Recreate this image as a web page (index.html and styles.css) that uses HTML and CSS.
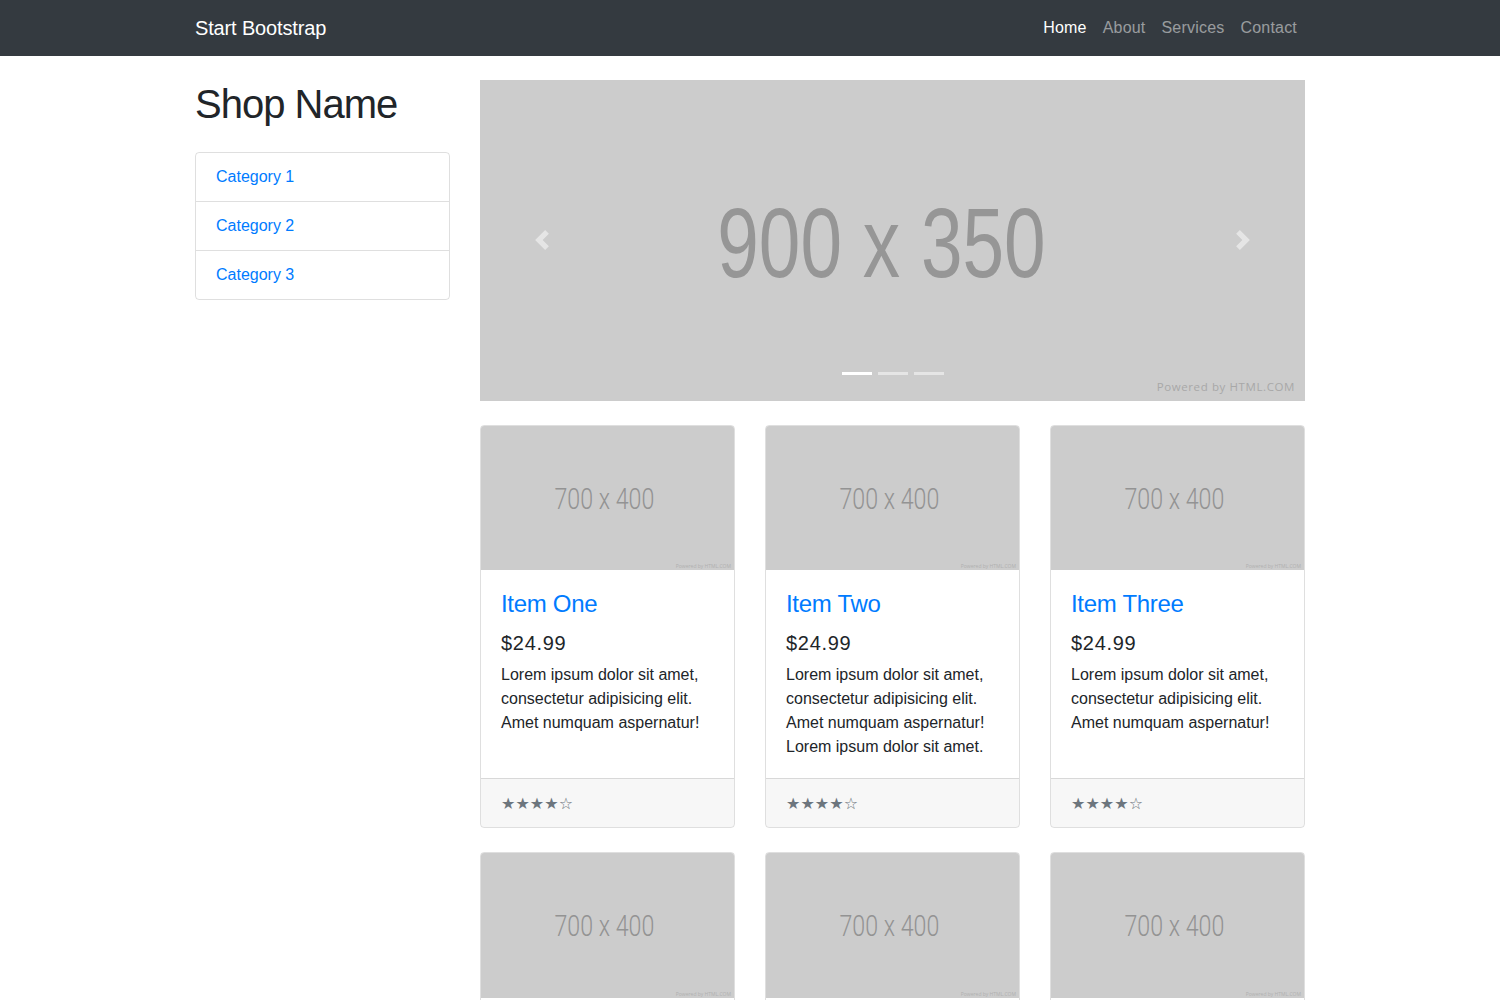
FILE: index.html
```html
<!DOCTYPE html>
<html lang="en">
<head>
<meta charset="utf-8">
<title>Shop Homepage - Start Bootstrap Template</title>
<link rel="stylesheet" href="styles.css">
</head>
<body>
<nav class="navbar">
  <div class="container nav-inner">
    <a class="brand" href="#">Start Bootstrap</a>
    <ul class="nav-links">
      <li><a class="nav-link active" href="#">Home</a></li>
      <li><a class="nav-link" href="#">About</a></li>
      <li><a class="nav-link" href="#">Services</a></li>
      <li><a class="nav-link" href="#">Contact</a></li>
    </ul>
  </div>
</nav>

<div class="container">
  <div class="row">
    <div class="col-side">
      <h1 class="shop-title">Shop Name</h1>
      <div class="list-group">
        <a href="#" class="list-item">Category 1</a>
        <a href="#" class="list-item">Category 2</a>
        <a href="#" class="list-item">Category 3</a>
      </div>
    </div>

    <div class="col-main">
      <div class="carousel">
        <div class="ph-big"><span class="ph-big-text">900 x 350</span></div>
        <span class="ph-powered">Powered by HTML.COM</span>
        <a class="carousel-ctrl prev" href="#">
          <svg class="ctrl-icon" viewBox="0 0 8 8" width="20" height="20"><path fill="#fff" d="M5.25 0l-4 4 4 4 1.5-1.5L4.25 4l2.5-2.5L5.25 0z"/></svg>
        </a>
        <a class="carousel-ctrl next" href="#">
          <svg class="ctrl-icon" viewBox="0 0 8 8" width="20" height="20"><path fill="#fff" d="M2.75 0l-1.5 1.5L3.75 4l-2.5 2.5L2.75 8l4-4-4-4z"/></svg>
        </a>
        <ol class="indicators">
          <li class="ind active"></li>
          <li class="ind"></li>
          <li class="ind"></li>
        </ol>
      </div>

      <div class="card-grid">
        <div class="card">
          <div class="card-img"><span class="card-img-text">700 x 400</span><span class="card-powered">Powered by HTML.COM</span></div>
          <div class="card-body">
            <h4 class="card-title"><a href="#">Item One</a></h4>
            <h5 class="price">$24.99</h5>
            <p class="card-text">Lorem ipsum dolor sit amet, consectetur adipisicing elit. Amet numquam aspernatur!</p>
          </div>
          <div class="card-footer"><small class="stars">&#9733; &#9733; &#9733; &#9733; &#9734;</small></div>
        </div>
        <div class="card">
          <div class="card-img"><span class="card-img-text">700 x 400</span><span class="card-powered">Powered by HTML.COM</span></div>
          <div class="card-body">
            <h4 class="card-title"><a href="#">Item Two</a></h4>
            <h5 class="price">$24.99</h5>
            <p class="card-text">Lorem ipsum dolor sit amet, consectetur adipisicing elit. Amet numquam aspernatur! Lorem ipsum dolor sit amet.</p>
          </div>
          <div class="card-footer"><small class="stars">&#9733; &#9733; &#9733; &#9733; &#9734;</small></div>
        </div>
        <div class="card">
          <div class="card-img"><span class="card-img-text">700 x 400</span><span class="card-powered">Powered by HTML.COM</span></div>
          <div class="card-body">
            <h4 class="card-title"><a href="#">Item Three</a></h4>
            <h5 class="price">$24.99</h5>
            <p class="card-text">Lorem ipsum dolor sit amet, consectetur adipisicing elit. Amet numquam aspernatur!</p>
          </div>
          <div class="card-footer"><small class="stars">&#9733; &#9733; &#9733; &#9733; &#9734;</small></div>
        </div>
        <div class="card">
          <div class="card-img"><span class="card-img-text">700 x 400</span><span class="card-powered">Powered by HTML.COM</span></div>
          <div class="card-body">
            <h4 class="card-title"><a href="#">Item Four</a></h4>
            <h5 class="price">$24.99</h5>
            <p class="card-text">Lorem ipsum dolor sit amet, consectetur adipisicing elit. Amet numquam aspernatur!</p>
          </div>
          <div class="card-footer"><small class="stars">&#9733; &#9733; &#9733; &#9733; &#9734;</small></div>
        </div>
        <div class="card">
          <div class="card-img"><span class="card-img-text">700 x 400</span><span class="card-powered">Powered by HTML.COM</span></div>
          <div class="card-body">
            <h4 class="card-title"><a href="#">Item Five</a></h4>
            <h5 class="price">$24.99</h5>
            <p class="card-text">Lorem ipsum dolor sit amet, consectetur adipisicing elit. Amet numquam aspernatur! Lorem ipsum dolor sit amet.</p>
          </div>
          <div class="card-footer"><small class="stars">&#9733; &#9733; &#9733; &#9733; &#9734;</small></div>
        </div>
        <div class="card">
          <div class="card-img"><span class="card-img-text">700 x 400</span><span class="card-powered">Powered by HTML.COM</span></div>
          <div class="card-body">
            <h4 class="card-title"><a href="#">Item Six</a></h4>
            <h5 class="price">$24.99</h5>
            <p class="card-text">Lorem ipsum dolor sit amet, consectetur adipisicing elit. Amet numquam aspernatur!</p>
          </div>
          <div class="card-footer"><small class="stars">&#9733; &#9733; &#9733; &#9733; &#9734;</small></div>
        </div>
      </div>
    </div>
  </div>
</div>

<footer class="footer">
  <div class="container">
    <p class="footer-text">Copyright &copy; Your Website 2019</p>
  </div>
</footer>
</body>
</html>
```

FILE: styles.css
```css
* { box-sizing: border-box; }

html, body {
  margin: 0;
  padding: 0;
}

body {
  font-family: "Liberation Sans", Arial, sans-serif;
  font-size: 16px;
  line-height: 1.5;
  color: #212529;
  background: #fff;
}

a { color: #007bff; text-decoration: none; }

.container {
  max-width: 1140px;
  margin: 0 auto;
  padding: 0 15px;
}

/* Navbar */
.navbar {
  background: #343a40;
  padding: 8px 16px;
}
.nav-inner {
  display: flex;
  align-items: center;
  justify-content: space-between;
  padding: 0;
  max-width: 1110px;
}
.brand {
  color: #fff;
  font-size: 20px;
  line-height: 30px;
  padding: 5px 0;
  letter-spacing: -0.15px;
}
.nav-links {
  display: flex;
  list-style: none;
  margin: 0;
  padding: 0;
}
.nav-link {
  display: block;
  padding: 8px;
  color: rgba(255, 255, 255, 0.5);
  line-height: 24px;
  letter-spacing: 0.2px;
}
.nav-link.active { color: #fff; }

/* Layout */
.row {
  display: flex;
  margin: 0 -15px;
}
.col-side {
  flex: 0 0 25%;
  max-width: 25%;
  padding: 0 15px;
}
.col-main {
  flex: 0 0 75%;
  max-width: 75%;
  padding: 0 15px;
}

.shop-title {
  font-size: 40px;
  font-weight: 500;
  line-height: 1.2;
  margin: 24px 0;
  letter-spacing: -1px;
}

.list-group {
  display: flex;
  flex-direction: column;
  border: 1px solid rgba(0, 0, 0, 0.125);
  border-radius: 4px;
}
.list-item {
  display: block;
  padding: 12px 20px;
  line-height: 24px;
  border-top: 1px solid rgba(0, 0, 0, 0.125);
}
.list-item:first-child { border-top: 0; }

/* Carousel */
.carousel {
  position: relative;
  margin: 24px 0;
  background: #ccc;
  aspect-ratio: 900 / 350;
  overflow: hidden;
}
.ph-big {
  height: 100%;
  display: flex;
  align-items: center;
  justify-content: center;
  padding-right: 22px;
}
.ph-big-text {
  display: inline-block;
  font-family: "Liberation Sans", Arial, sans-serif;
  font-size: 99px;
  line-height: 1;
  color: #969696;
  transform: scaleX(0.755);
  white-space: nowrap;
  margin-top: 4px;
}
.ph-powered {
  position: absolute;
  right: 10px;
  bottom: 6px;
  font-family: "Open Sans", sans-serif;
  font-size: 11.5px;
  letter-spacing: 0.6px;
  color: #a8a8a8;
}
.carousel-ctrl {
  position: absolute;
  top: 0;
  bottom: 0;
  width: 15%;
  display: flex;
  align-items: center;
  justify-content: center;
  opacity: 0.5;
}
.carousel-ctrl.prev { left: 0; }
.carousel-ctrl.next { right: 0; }
.ctrl-icon { display: block; }

.indicators {
  position: absolute;
  left: 0;
  right: 0;
  bottom: 0;
  display: flex;
  justify-content: center;
  list-style: none;
  margin: 0 0 16px;
  padding: 0;
}
.ind {
  width: 30px;
  height: 3px;
  margin: 0 3px;
  background: #fff;
  opacity: 0.5;
  box-sizing: content-box;
  border-top: 10px solid transparent;
  border-bottom: 10px solid transparent;
  background-clip: padding-box;
}
.ind.active { opacity: 1; }

/* Cards */
.card-grid {
  display: grid;
  grid-template-columns: repeat(3, 1fr);
  column-gap: 30px;
  row-gap: 24px;
  margin-bottom: 24px;
}
.card {
  display: flex;
  flex-direction: column;
  border: 1px solid rgba(0, 0, 0, 0.125);
  border-radius: 4px;
  overflow: hidden;
}
.card-img {
  position: relative;
  aspect-ratio: 700 / 400;
  background: #ccc;
  display: flex;
  align-items: center;
  justify-content: center;
  padding-right: 6px;
  padding-top: 2px;
}
.card-img-text {
  display: inline-block;
  font-family: Roboto, "Liberation Sans", sans-serif;
  font-weight: 300;
  font-size: 29px;
  line-height: 1;
  color: #939393;
  transform: scaleX(0.8);
  white-space: nowrap;
}
.card-powered {
  position: absolute;
  right: 3px;
  bottom: 1px;
  font-family: "Open Sans", sans-serif;
  font-size: 5px;
  line-height: 6px;
  color: #b0b0b0;
}
.card-body {
  flex: 1 1 auto;
  padding: 20px 20px 19px;
}
.card-title {
  font-size: 24px;
  font-weight: 500;
  line-height: 1.2;
  margin: 0 0 12px;
  letter-spacing: -0.3px;
}
.price {
  font-size: 20px;
  font-weight: 500;
  line-height: 1.2;
  margin: 0 0 8px;
  letter-spacing: 0.7px;
}
.card-text {
  margin: 0;
}
.card-footer {
  padding: 12px 20px;
  background: rgba(0, 0, 0, 0.03);
  border-top: 1px solid rgba(0, 0, 0, 0.125);
  height: 49px;
  display: flex;
  align-items: center;
}
.stars {
  display: block;
  font-family: "DejaVu Sans", sans-serif;
  font-size: 16px;
  line-height: 24px;
  padding-top: 2px;
  color: #6c757d;
  word-spacing: -5px;
}

/* Footer */
.footer {
  background: #343a40;
  padding: 48px 0;
}
.footer-text {
  margin: 0;
  text-align: center;
  color: #fff;
}
```
